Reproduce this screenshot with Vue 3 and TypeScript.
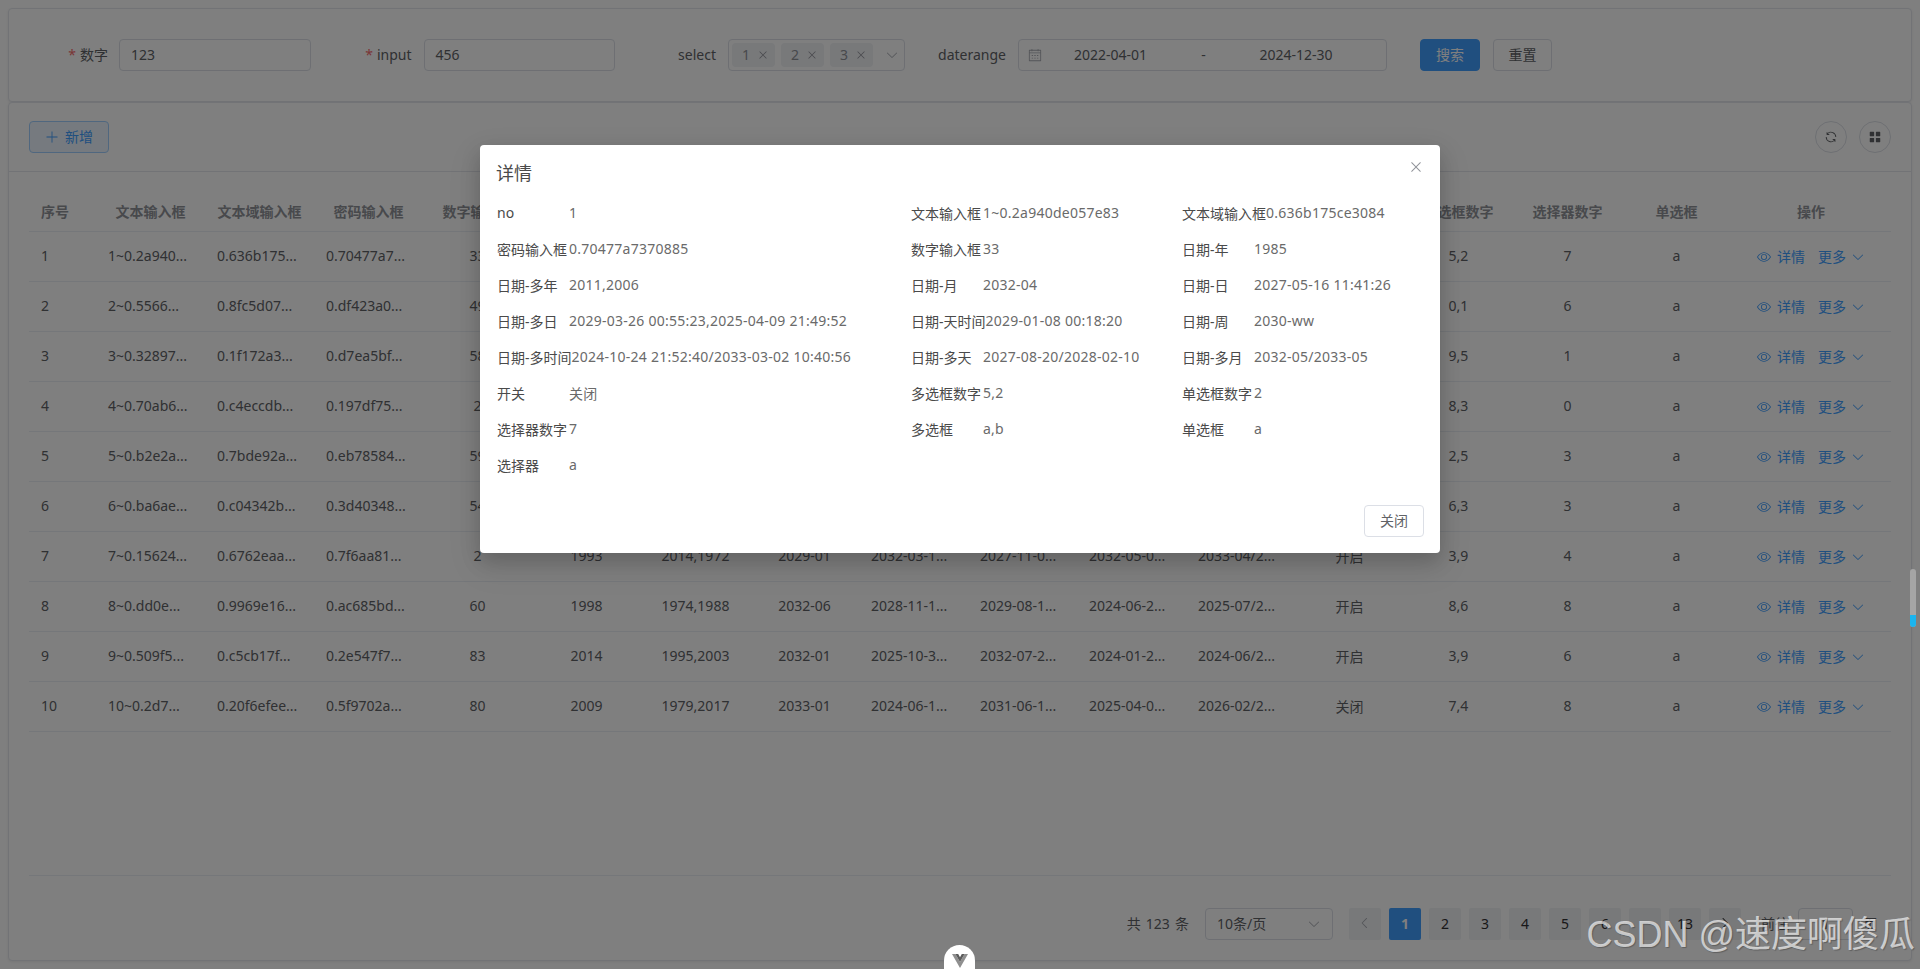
<template>
  <div class="page">
    <section class="card search-card">
      <div class="form-item">
        <label class="form-label"><i class="star">*</i>数字</label>
        <div class="input text-input">123</div>
      </div>
      <div class="form-item">
        <label class="form-label"><i class="star">*</i>input</label>
        <div class="input text-input">456</div>
      </div>
      <div class="form-item">
        <label class="form-label">select</label>
        <div class="input select-input">
          <span v-for="tag in tags" :key="tag" class="tag">
            {{ tag }}
            <svg class="ico tag-x" viewBox="0 0 1024 1024"><path :d="icons.close" /></svg>
          </span>
          <svg class="ico select-arrow" viewBox="0 0 1024 1024"><path :d="icons.down" /></svg>
        </div>
      </div>
      <div class="form-item">
        <label class="form-label">daterange</label>
        <div class="input date-input">
          <svg class="ico date-ico" viewBox="0 0 1024 1024"><path :d="icons.calendar" /></svg>
          <span class="date-val first">2022-04-01</span>
          <span class="date-sep">-</span>
          <span class="date-val">2024-12-30</span>
        </div>
      </div>
      <button class="btn btn-primary search-btn">搜索</button>
      <button class="btn reset-btn">重置</button>
    </section>

    <section class="card table-card">
      <div class="toolbar">
        <button class="btn btn-plain">
          <svg class="ico plus-ico" viewBox="0 0 1024 1024"><path :d="icons.plus" /></svg>
          新增
        </button>
        <div class="tool-right">
          <button class="circle-btn">
            <svg class="ico" viewBox="0 0 1024 1024"><path :d="icons.refresh" /></svg>
          </button>
          <button class="circle-btn">
            <svg class="ico" viewBox="0 0 1024 1024"><path :d="icons.menu" /></svg>
          </button>
        </div>
      </div>

      <div class="table-wrap">
        <table class="table">
          <colgroup>
            <col style="width: 67px" />
            <col v-for="n in 15" :key="n" style="width: 109px" />
            <col style="width: 160px" />
          </colgroup>
          <thead>
            <tr>
              <th v-for="(h, i) in headers" :key="h" :class="{ left: i === 0 }">{{ h }}</th>
            </tr>
          </thead>
          <tbody>
            <tr v-for="(row, r) in rows" :key="r">
              <td v-for="(cell, c) in row" :key="c" :class="{ left: leftCols.includes(c) }">{{ cell }}</td>
              <td>
                <div class="actions">
                  <svg class="ico eye-ico" viewBox="0 0 1024 1024"><path :d="icons.view" /></svg>
                  <a class="link">详情</a>
                  <a class="link more">更多</a>
                  <svg class="ico more-ico" viewBox="0 0 1024 1024"><path :d="icons.down" /></svg>
                </div>
              </td>
            </tr>
          </tbody>
        </table>
      </div>

      <div class="pager">
        <span class="total">共 123 条</span>
        <div class="input size-select">
          10条/页
          <svg class="ico size-arrow" viewBox="0 0 1024 1024"><path :d="icons.down" /></svg>
        </div>
        <button class="page-btn prev">
          <svg class="ico" viewBox="0 0 1024 1024"><path :d="icons.left" /></svg>
        </button>
        <button v-for="p in pages" :key="p" class="page-btn" :class="{ active: p === '1' }">{{ p }}</button>
        <button class="page-btn next">
          <svg class="ico" viewBox="0 0 1024 1024"><path :d="icons.right" /></svg>
        </button>
        <span class="jump">前往</span>
        <div class="input jump-input">1</div>
        <span class="jump-end">页</span>
      </div>
    </section>

    <div class="mask">
      <div class="dialog">
        <div class="dialog-head">
          <span class="dialog-title">详情</span>
          <svg class="ico dialog-close" viewBox="0 0 1024 1024"><path :d="icons.close" /></svg>
        </div>
        <div class="detail-grid">
          <div v-for="item in details" :key="item[0]" class="detail-item">
            <span class="detail-label">{{ item[0] }}</span>
            <span class="detail-value">{{ item[1] }}</span>
          </div>
        </div>
        <div class="dialog-foot">
          <button class="btn">关闭</button>
        </div>
      </div>
    </div>

    <div class="scroll-widget"><span class="scroll-fill"></span></div>
    <div class="devtools-pill">
      <svg width="16" height="14" viewBox="0 0 16 14">
        <path d="M0 0h3.4L8 8l4.6-8H16L8 14z" fill="#8f8f8f" />
        <path d="M3.4 0h2.8L8 3.2 9.8 0h2.8L8 8z" fill="#5c5c5c" />
      </svg>
    </div>
    <div class="watermark">CSDN @速度啊傻瓜</div>
  </div>
</template>

<script setup lang="ts">
const icons = {
  close: 'M764.288 214.592 512 466.88 259.712 214.592a31.936 31.936 0 0 0-45.12 45.12L466.752 512 214.528 764.224a31.936 31.936 0 1 0 45.12 45.184L512 557.184l252.288 252.288a31.936 31.936 0 0 0 45.12-45.12L557.12 512.064l252.288-252.352a31.936 31.936 0 1 0-45.12-45.184z',
  down: 'M831.872 340.864 512 652.672 192.128 340.864a30.592 30.592 0 0 0-42.752 0 29.12 29.12 0 0 0 0 41.6L489.664 714.24a32 32 0 0 0 44.672 0l340.288-331.712a29.12 29.12 0 0 0 0-41.728 30.592 30.592 0 0 0-42.752 0z',
  left: 'M609.408 149.376 277.76 489.6a32 32 0 0 0 0 44.672l331.648 340.352a29.12 29.12 0 0 0 41.728 0 30.592 30.592 0 0 0 0-42.752L339.264 511.936l311.872-319.872a30.592 30.592 0 0 0 0-42.688 29.12 29.12 0 0 0-41.728 0z',
  right: 'M340.864 149.312a30.592 30.592 0 0 0 0 42.752L652.736 512 340.864 831.872a30.592 30.592 0 0 0 0 42.752 29.12 29.12 0 0 0 41.728 0L714.24 534.336a32 32 0 0 0 0-44.672L382.592 149.376a29.12 29.12 0 0 0-41.728 0z',
  plus: 'M480 480V128a32 32 0 0 1 64 0v352h352a32 32 0 1 1 0 64H544v352a32 32 0 1 1-64 0V544H128a32 32 0 0 1 0-64z',
  refresh: 'M771.776 794.88A384 384 0 0 1 128 512h64a320 320 0 0 0 555.712 216.448H654.72a32 32 0 1 1 0-64h149.056a32 32 0 0 1 32 32v148.928a32 32 0 1 1-64 0v-50.56zM276.288 295.616h92.992a32 32 0 0 1 0 64H220.16a32 32 0 0 1-32-32V178.56a32 32 0 0 1 64 0v50.56A384 384 0 0 1 896.128 512h-64a320 320 0 0 0-555.776-216.384z',
  menu: 'M160 448a32 32 0 0 1-32-32V160.064a32 32 0 0 1 32-32h256a32 32 0 0 1 32 32V416a32 32 0 0 1-32 32zm448 0a32 32 0 0 1-32-32V160.064a32 32 0 0 1 32-32h255.936a32 32 0 0 1 32 32V416a32 32 0 0 1-32 32zM160 896a32 32 0 0 1-32-32V608a32 32 0 0 1 32-32h256a32 32 0 0 1 32 32v256a32 32 0 0 1-32 32zm448 0a32 32 0 0 1-32-32V608a32 32 0 0 1 32-32h255.936a32 32 0 0 1 32 32v256a32 32 0 0 1-32 32z',
  view: 'M512 160c320 0 512 352 512 352S832 864 512 864 0 512 0 512s192-352 512-352m0 64c-225.28 0-384.128 208.064-436.8 288 52.608 79.872 211.456 288 436.8 288 225.28 0 384.128-208.064 436.8-288-52.608-79.872-211.456-288-436.8-288zm0 64a224 224 0 1 1 0 448 224 224 0 0 1 0-448m0 64a160.192 160.192 0 0 0-160 160c0 88.192 71.744 160 160 160s160-71.808 160-160-71.744-160-160-160',
  calendar: 'M128 384v512h768V192H768v32a32 32 0 1 1-64 0v-32H320v32a32 32 0 0 1-64 0v-32H128v128h768v64zm192-256h384V96a32 32 0 1 1 64 0v32h160a32 32 0 0 1 32 32v768a32 32 0 0 1-32 32H96a32 32 0 0 1-32-32V160a32 32 0 0 1 32-32h160V96a32 32 0 0 1 64 0zm-32 384h64a32 32 0 0 1 0 64h-64a32 32 0 0 1 0-64m0 192h64a32 32 0 1 1 0 64h-64a32 32 0 1 1 0-64m192-192h64a32 32 0 0 1 0 64h-64a32 32 0 0 1 0-64m0 192h64a32 32 0 1 1 0 64h-64a32 32 0 1 1 0-64m192-192h64a32 32 0 1 1 0 64h-64a32 32 0 1 1 0-64m0 192h64a32 32 0 1 1 0 64h-64a32 32 0 1 1 0-64'
}

const tags = ['1', '2', '3']
const pages = ['1', '2', '3', '4', '5', '6', '', '13']

const headers = [
  '序号', '文本输入框', '文本域输入框', '密码输入框', '数字输入框', '日期-年', '日期-多年', '日期-月',
  '日期-日', '日期-多日', '日期-天时间', '日期-多月', '开关', '多选框数字', '选择器数字', '单选框', '操作'
]

const leftCols = [0, 1, 2, 3, 8, 9, 10, 11]

const rows = [
  ['1', '1~0.2a940...', '0.636b175...', '0.70477a7...', '33', '1985', '2011,2006', '2032-04', '2027-05-1...', '2029-03-2...', '2029-01-0...', '2032-05/2...', '关闭', '5,2', '7', 'a'],
  ['2', '2~0.5566...', '0.8fc5d07...', '0.df423a0...', '49', '', '', '', '', '', '', '', '', '0,1', '6', 'a'],
  ['3', '3~0.32897...', '0.1f172a3...', '0.d7ea5bf...', '58', '', '', '', '', '', '', '', '', '9,5', '1', 'a'],
  ['4', '4~0.70ab6...', '0.c4eccdb...', '0.197df75...', '2', '', '', '', '', '', '', '', '', '8,3', '0', 'a'],
  ['5', '5~0.b2e2a...', '0.7bde92a...', '0.eb78584...', '59', '', '', '', '', '', '', '', '', '2,5', '3', 'a'],
  ['6', '6~0.ba6ae...', '0.c04342b...', '0.3d40348...', '54', '', '', '', '', '', '', '', '', '6,3', '3', 'a'],
  ['7', '7~0.15624...', '0.6762eaa...', '0.7f6aa81...', '2', '1993', '2014,1972', '2029-01', '2032-03-1...', '2027-11-0...', '2032-05-0...', '2033-04/2...', '开启', '3,9', '4', 'a'],
  ['8', '8~0.dd0e...', '0.9969e16...', '0.ac685bd...', '60', '1998', '1974,1988', '2032-06', '2028-11-1...', '2029-08-1...', '2024-06-2...', '2025-07/2...', '开启', '8,6', '8', 'a'],
  ['9', '9~0.509f5...', '0.c5cb17f...', '0.2e547f7...', '83', '2014', '1995,2003', '2032-01', '2025-10-3...', '2032-07-2...', '2024-01-2...', '2024-06/2...', '开启', '3,9', '6', 'a'],
  ['10', '10~0.2d7...', '0.20f6efee...', '0.5f9702a...', '80', '2009', '1979,2017', '2033-01', '2024-06-1...', '2031-06-1...', '2025-04-0...', '2026-02/2...', '关闭', '7,4', '8', 'a']
]

const details = [
  ['no', '1'],
  ['文本输入框', '1~0.2a940de057e83'],
  ['文本域输入框', '0.636b175ce3084'],
  ['密码输入框', '0.70477a7370885'],
  ['数字输入框', '33'],
  ['日期-年', '1985'],
  ['日期-多年', '2011,2006'],
  ['日期-月', '2032-04'],
  ['日期-日', '2027-05-16 11:41:26'],
  ['日期-多日', '2029-03-26 00:55:23,2025-04-09 21:49:52'],
  ['日期-天时间', '2029-01-08 00:18:20'],
  ['日期-周', '2030-ww'],
  ['日期-多时间', '2024-10-24 21:52:40/2033-03-02 10:40:56'],
  ['日期-多天', '2027-08-20/2028-02-10'],
  ['日期-多月', '2032-05/2033-05'],
  ['开关', '关闭'],
  ['多选框数字', '5,2'],
  ['单选框数字', '2'],
  ['选择器数字', '7'],
  ['多选框', 'a,b'],
  ['单选框', 'a'],
  ['选择器', 'a']
]
</script>

<style>
html,
body {
  margin: 0;
  overflow: hidden;
}
</style>

<style scoped>
.page {
  position: relative;
  box-sizing: border-box;
  height: 969px;
  padding: 8px;
  display: flex;
  flex-direction: column;
  overflow: hidden;
  background: #fff;
  font-family: "Noto Sans", "Noto Sans CJK SC", sans-serif;
  font-size: 14px;
  color: #606266;
}

.ico {
  width: 14px;
  height: 14px;
  fill: currentColor;
  flex: none;
}

.card {
  box-sizing: border-box;
  border: 1px solid #e4e7ed;
  border-radius: 4px;
  background: #fff;
  box-shadow: 0 1px 3px rgba(0, 0, 0, 0.08);
}

.search-card {
  height: 94px;
  padding: 30px 19px;
  display: flex;
  align-items: center;
}

.form-item {
  display: flex;
  align-items: center;
  margin-right: 22px;
}

.form-label {
  box-sizing: border-box;
  width: 91px;
  padding: 0 11px 2px 0;
  text-align: right;
}

.form-item + .form-item .form-label {
  padding-right: 12px;
}

.star {
  color: #f56c6c;
  font-style: normal;
  margin-right: 4px;
}

.input {
  box-sizing: border-box;
  height: 32px;
  border: 1px solid #dcdfe6;
  border-radius: 4px;
  display: flex;
  align-items: center;
}

.text-input {
  width: 191.5px;
  padding: 0 11px 2px;
}

.select-input {
  width: 177px;
  padding-left: 3px;
  gap: 6px;
}

.tag {
  box-sizing: border-box;
  width: 43px;
  height: 24px;
  padding: 0 0 2px 10px;
  display: flex;
  align-items: center;
  gap: 7px;
  border-radius: 4px;
  background: #f0f2f5;
  color: #909399;
}

.tag-x {
  width: 12px;
  height: 12px;
  margin-top: 2px;
}

.select-arrow {
  margin-left: 6px;
  color: #a8abb2;
}

.date-input {
  width: 369px;
  padding: 0 0 2px 9px;
}

.date-ico {
  margin-top: 2px;
  color: #a8abb2;
}

.date-val {
  width: 136px;
  text-align: center;
}

.date-val.first {
  width: 137px;
}

.date-sep {
  width: 49px;
  text-align: center;
}

.btn {
  box-sizing: border-box;
  height: 32px;
  padding: 0 15px 2px;
  border: 1px solid #dcdfe6;
  border-radius: 4px;
  background: #fff;
  color: #606266;
  font: inherit;
  display: inline-flex;
  align-items: center;
}

.btn-primary {
  border-color: #409eff;
  background: #409eff;
  color: #fff;
}

.search-btn {
  margin-left: 11px;
}

.reset-btn {
  width: 59px;
  margin-left: 13px;
  padding: 0 0 2px;
  justify-content: center;
}

.btn-plain {
  border-color: #a0cfff;
  background: #ecf5ff;
  color: #409eff;
}

.plus-ico {
  margin: 2px 6px 0 0;
}

.table-card {
  flex: 1;
  display: flex;
  flex-direction: column;
}

.toolbar {
  box-sizing: border-box;
  height: 69px;
  padding: 18px 20px;
  display: flex;
  justify-content: space-between;
  border-bottom: 1px solid #e4e7ed;
}

.tool-right {
  display: flex;
  gap: 12px;
}

.circle-btn {
  box-sizing: border-box;
  width: 32px;
  height: 32px;
  padding: 0;
  border: 1px solid #dcdfe6;
  border-radius: 50%;
  background: #fff;
  color: #606266;
  display: flex;
  align-items: center;
  justify-content: center;
}

.table-wrap {
  flex: 1;
  margin: 0 20px;
  padding-top: 20px;
  border-bottom: 1px solid #ebeef5;
}

.table {
  width: 1862px;
  table-layout: fixed;
  border-collapse: separate;
  border-spacing: 0;
}

.table th,
.table td {
  box-sizing: border-box;
  padding: 0 12px 2px;
  border-bottom: 1px solid #ebeef5;
  text-align: center;
  white-space: nowrap;
  overflow: hidden;
  font-size: 14px;
}

.table th {
  height: 40px;
  color: #909399;
  font-weight: 700;
}

.table td {
  height: 50px;
}

.table .left {
  text-align: left;
}

.actions {
  display: flex;
  align-items: center;
  justify-content: center;
  color: #409eff;
}

.eye-ico {
  margin: 2px 6px 0 0;
}

.link {
  color: #409eff;
}

.more {
  margin: 0 5px 0 13px;
}

.more-ico {
  margin-top: 2px;
}

.pager {
  height: 32px;
  padding: 32px 34px 20px 0;
  display: flex;
  align-items: center;
  justify-content: flex-end;
}

.total {
  margin: 0 16px 2px 0;
  word-spacing: 1.5px;
}

.size-select {
  width: 128px;
  padding: 0 11px 2px;
  justify-content: space-between;
  margin-right: 16px;
}

.size-arrow {
  margin-top: 2px;
  color: #a8abb2;
}

.page-btn {
  box-sizing: border-box;
  width: 32px;
  height: 32px;
  padding: 0 0 2px;
  margin-right: 8px;
  border: none;
  border-radius: 2px;
  background: #f0f2f5;
  color: #303133;
  font: inherit;
  display: flex;
  align-items: center;
  justify-content: center;
}

.page-btn.prev {
  color: #a8abb2;
}

.page-btn.active {
  background: #409eff;
  color: #fff;
  font-weight: 700;
}

.jump {
  margin: 0 0 2px 12px;
}

.jump-end {
  margin-bottom: 2px;
}

.jump-input {
  width: 55px;
  margin: 0 10px 0 9px;
  padding-bottom: 2px;
  justify-content: center;
}

.mask {
  position: absolute;
  inset: 0;
  background: rgba(0, 0, 0, 0.5);
}

.dialog {
  box-sizing: border-box;
  width: 960px;
  margin: 145px auto 0;
  padding: 16px;
  border-radius: 4px;
  background: #fff;
  box-shadow: 0 12px 32px 4px rgba(0, 0, 0, 0.08), 0 8px 20px rgba(0, 0, 0, 0.16);
}

.dialog-head {
  height: 35px;
  display: flex;
  justify-content: space-between;
}

.dialog-title {
  font-size: 18px;
  line-height: 24px;
  color: #4a4a4a;
}

.dialog-close {
  width: 16px;
  height: 16px;
  color: #909399;
  margin-top: -2px;
}

.detail-grid {
  display: grid;
  grid-template-columns: 414px 271px 1fr;
  grid-auto-rows: 36px;
  padding-left: 1px;
}

.detail-item {
  box-sizing: border-box;
  padding-bottom: 3px;
  display: flex;
  align-items: center;
  white-space: nowrap;
}

.detail-label {
  min-width: 72px;
  color: #4a4a4a;
}

.detail-value {
  color: #6a6a6a;
  letter-spacing: 0.25px;
}

.dialog-foot {
  margin-top: 21px;
  display: flex;
  justify-content: flex-end;
}

.scroll-widget {
  position: absolute;
  right: 4px;
  top: 569px;
  width: 6px;
  height: 58px;
  border-radius: 3px;
  overflow: hidden;
  background: #a5a5a5;
  display: flex;
  align-items: flex-end;
}

.scroll-fill {
  width: 100%;
  height: 12px;
  background: #1ab4ef;
}

.devtools-pill {
  position: absolute;
  left: 944px;
  top: 945px;
  width: 31px;
  height: 40px;
  border-radius: 16px 16px 0 0;
  background: #fff;
  display: flex;
  justify-content: center;
  padding-top: 9px;
  box-sizing: border-box;
}

.watermark {
  position: absolute;
  right: 5px;
  top: 914px;
  font-family: "Liberation Sans", "Noto Sans CJK SC", sans-serif;
  font-size: 36px;
  line-height: 42px;
  color: rgba(255, 255, 255, 0.68);
  text-shadow: 1px 1px 1px rgba(0, 0, 0, 0.25);
  white-space: nowrap;
}
</style>
